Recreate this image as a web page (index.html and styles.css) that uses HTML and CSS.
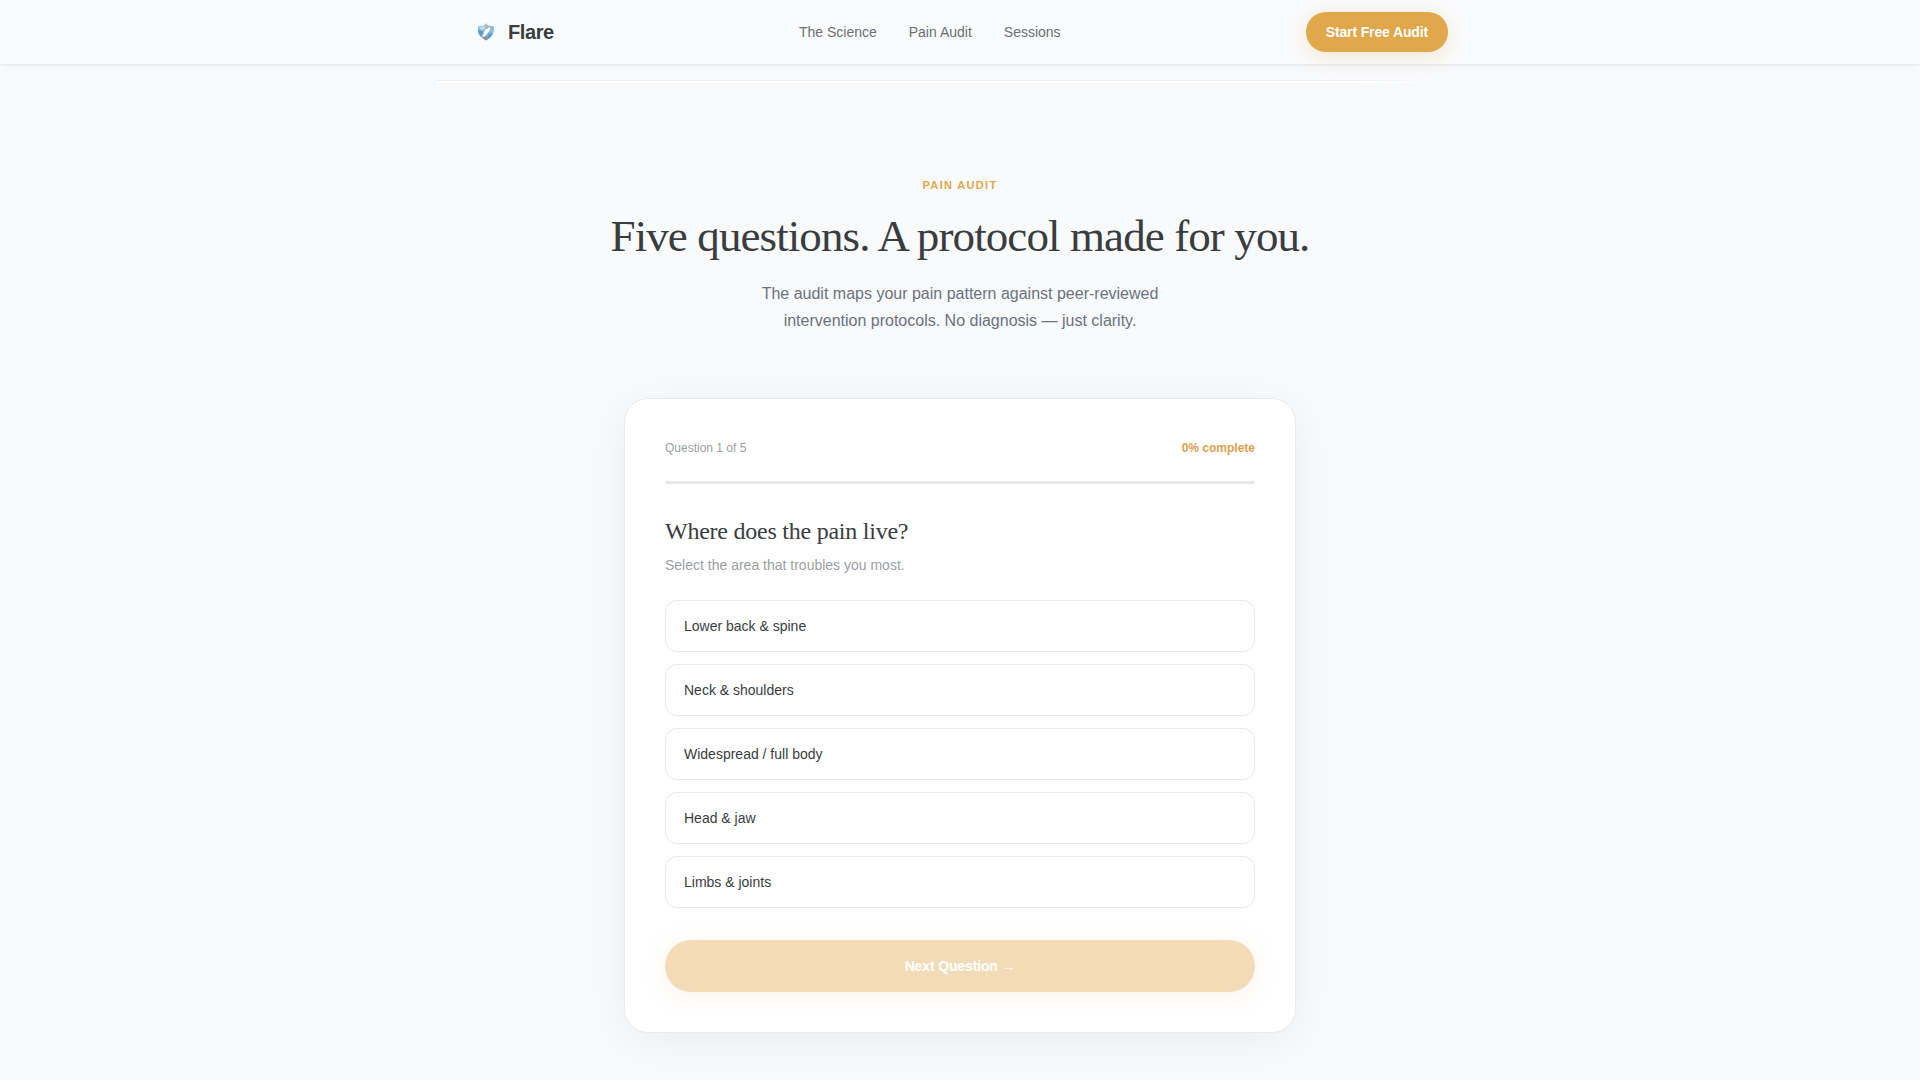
FILE: index.html
```html
<!DOCTYPE html>
<html lang="en">
<head>
<meta charset="utf-8">
<meta name="viewport" content="width=device-width, initial-scale=1">
<title>Flare — Pain Audit</title>
<link rel="stylesheet" href="styles.css">
</head>
<body>
<header class="site-header">
  <div class="header-inner">
    <a class="brand" href="#">
      <svg class="brand-mark" viewBox="0 0 28 28" aria-hidden="true">
        <path d="M14 5.500L16 7.500 22 8.500C22.500 14 20.500 19 14 22.500 7.500 19 5.500 14 6 8.500L12 7.500Z" fill="#86bfe2"/>
        <path d="M6 12L12 13 9 19C7 17 6 15 6 12Z" fill="#5b9dca"/>
        <path d="M7 9L12 8 14 10 10 13Z" fill="#b9dbed"/>
        <path d="M16 16L21 15C20 18 18 20 15 22Z" fill="#5a9fcc"/>
        <path d="M10 19L14 16 15 21 14 22.500Z" fill="#94857a"/>
        <path d="M13 6.500L14 5.500 15.500 7 14 9Z" fill="#d9b98a"/>
        <path d="M9.500 18C12 16.500 11 14 12.500 12 14 10.500 16 10.500 17 8.500 19 9 19.500 11 18 12.500 17 14 16 15 13.500 18.500 12 19.500 10.500 19 9.500 18Z" fill="#fff" stroke="#7b868f" stroke-width=".5"/>
      </svg>
      <span>Flare</span>
    </a>
    <nav class="site-nav" aria-label="Main">
      <a href="#science">The Science</a>
      <a href="#audit">Pain Audit</a>
      <a href="#sessions">Sessions</a>
    </nav>
    <button class="btn btn-small" type="button">Start Free Audit</button>
  </div>
</header>
<main>
  <hr class="section-rule">
  <section class="audit" id="audit">
    <div class="intro">
      <p class="eyebrow">Pain Audit</p>
      <h1>Five questions. A protocol made for you.</h1>
      <p class="lead">The audit maps your pain pattern against peer-reviewed intervention protocols. No diagnosis — just clarity.</p>
    </div>
    <div class="card">
      <div class="status">
        <span>Question 1 of 5</span>
        <span class="percent">0% complete</span>
      </div>
      <div class="track" role="progressbar" aria-valuenow="0" aria-valuemin="0" aria-valuemax="100" aria-label="Audit progress"></div>
      <h2 id="question">Where does the pain live?</h2>
      <p class="hint">Select the area that troubles you most.</p>
      <div class="options" role="group" aria-labelledby="question">
        <button class="option" type="button">Lower back &amp; spine</button>
        <button class="option" type="button">Neck &amp; shoulders</button>
        <button class="option" type="button">Widespread / full body</button>
        <button class="option" type="button">Head &amp; jaw</button>
        <button class="option" type="button">Limbs &amp; joints</button>
      </div>
      <button class="btn btn-next" type="button" disabled>Next Question →</button>
    </div>
  </section>
</main>
</body>
</html>
```
FILE: styles.css
```css
* { box-sizing: border-box; }

body {
  margin: 0;
  background: #f9fafc;
  color: #3a3d40;
  font-family: "Liberation Sans", Arial, sans-serif;
}

h1, h2, p { margin: 0; }

h1, h2 {
  font-family: "Liberation Serif", "Times New Roman", serif;
  font-weight: 400;
}

button { font-family: inherit; }

.site-header {
  position: sticky;
  top: 0;
  background: #fafbfd;
  box-shadow: 0 1px 3px rgba(0, 0, 0, .08), 0 4px 12px rgba(0, 0, 0, .02);
}

.header-inner {
  display: flex;
  align-items: center;
  justify-content: space-between;
  max-width: 1024px;
  min-height: 64px;
  margin: 0 auto;
  padding: 12px 24px;
}

.brand {
  display: flex;
  align-items: center;
  gap: 8px;
  color: #3a3d40;
  font-size: 20px;
  font-weight: 700;
  letter-spacing: -.02em;
  text-decoration: none;
}

.brand-mark { width: 28px; height: 28px; }

.site-nav { display: flex; gap: 32px; }

.site-nav a {
  color: #6b7075;
  font-size: 14px;
  text-decoration: none;
}

.btn {
  border: 0;
  border-radius: 999px;
  background: #e0a84a;
  color: #fff;
  font-weight: 700;
  letter-spacing: -.01em;
  box-shadow: 0 4px 20px rgba(224, 168, 74, .25);
}

.btn-small {
  padding: 0 20px;
  font-size: 14px;
  line-height: 40px;
}

.section-rule {
  max-width: 1048px;
  height: 3px;
  margin: 16px auto 0;
  border: 0;
  background:
    linear-gradient(to right, #eff0f2 88%, transparent 96%) top / 100% 1px no-repeat,
    linear-gradient(to right, #fff 88%, transparent 96%);
}

.audit { padding: 94px 24px 48px; }

.intro { text-align: center; }

.eyebrow {
  color: #e0a84a;
  font-size: 11px;
  font-weight: 700;
  letter-spacing: .12em;
  line-height: 16px;
  text-transform: uppercase;
}

h1 {
  margin-top: 16px;
  font-size: 45px;
  line-height: 55px;
  letter-spacing: -.02em;
}

.lead {
  max-width: 440px;
  margin: 16px auto 0;
  color: #6b7280;
  font-size: 16px;
  line-height: 27px;
}

.card {
  max-width: 672px;
  margin: 64px auto 0;
  padding: 40px;
  border: 1px solid #e9ebed;
  border-radius: 24px;
  background: #fff;
  box-shadow: 0 8px 48px rgba(0, 0, 0, .06);
}

.status {
  display: flex;
  justify-content: space-between;
  color: #9ca0a3;
  font-size: 12px;
  line-height: 18px;
}

.percent { color: #e0a050; font-weight: 700; }

.track {
  height: 3px;
  margin: 24px 0 32px;
  border-radius: 2px;
  background: #e8e9ea;
}

h2 {
  font-size: 24px;
  line-height: 30px;
  letter-spacing: -.01em;
}

.hint {
  margin-top: 8px;
  color: #9ca0a3;
  font-size: 14px;
  line-height: 22px;
}

.options {
  display: grid;
  gap: 12px;
  margin-top: 24px;
}

.option {
  padding: 0 18px;
  border: 1px solid #e9ebec;
  border-radius: 12px;
  background: #fff;
  color: #3a3d40;
  font-size: 14px;
  line-height: 50px;
  text-align: left;
}

.btn-next {
  width: 100%;
  margin-top: 32px;
  padding: 0 24px;
  font-size: 14px;
  line-height: 52px;
}

.btn-next:disabled { opacity: .4; }
```
